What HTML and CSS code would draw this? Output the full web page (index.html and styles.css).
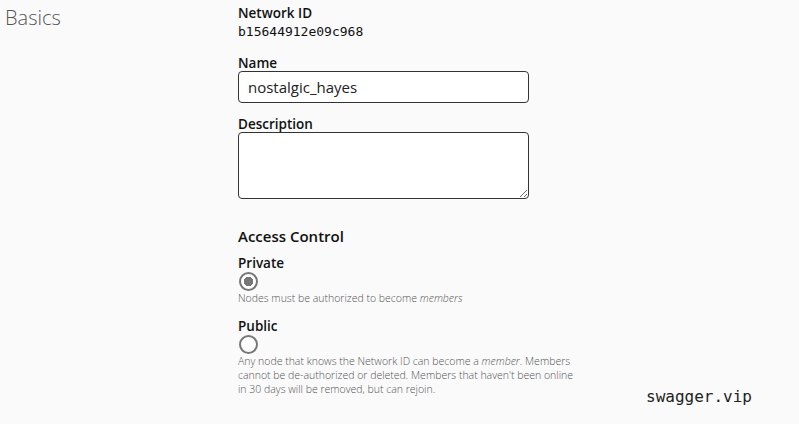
FILE: index.html
```html
<!DOCTYPE html>
<html lang="en">
<head>
  <meta charset="UTF-8">
  <title>Network settings</title>
  <meta name="viewport" content="width=device-width, initial-scale=1.0">
  <link rel="stylesheet" href="styles.css">
</head>
<body>
  <div class="page">
    <div class="side">
      <h1 class="section-title">Basics</h1>
    </div>

    <div class="form">
      <div class="field">
        <div class="label">Network ID</div>
        <div class="net-id">b15644912e09c968</div>
      </div>

      <div class="field">
        <label class="label" for="name">Name</label>
        <input class="text-input" id="name" type="text" value="nostalgic_hayes">
      </div>

      <div class="field">
        <label class="label" for="desc">Description</label>
        <textarea class="text-area" id="desc"></textarea>
      </div>

      <h2 class="sub-title">Access Control</h2>

      <div class="option">
        <div class="label">Private</div>
        <input class="radio" type="radio" name="access" checked>
        <p class="hint">Nodes must be authorized to become <em>members</em></p>
      </div>

      <div class="option">
        <div class="label">Public</div>
        <input class="radio" type="radio" name="access">
        <p class="hint">Any node that knows the Network ID can become a <em>member</em>. Members cannot be de-authorized or deleted. Members that haven't been online in 30 days will be removed, but can rejoin.</p>
      </div>
    </div>
  </div>

  <div class="watermark">swagger.vip</div>
</body>
</html>
```

FILE: styles.css
```css
body {
  margin: 0;
  padding: 0;
  background: #fafafa;
  font-family: 'Open Sans', sans-serif;
  color: #111;
  height: 424px;
  overflow: hidden;
  position: relative;
}

.page {
  display: flex;
}

.side {
  width: 233px;
  padding-left: 5px;
}

.section-title {
  margin: 4px 0 0;
  font-size: 20px;
  font-weight: 300;
  color: #555;
}

.form {
  width: 340px;
  padding-top: 5px;
}

.field {
  margin-bottom: 13px;
}

.label {
  display: block;
  font-size: 13.5px;
  font-weight: 600;
  line-height: 16px;
}

.net-id {
  font-family: 'DejaVu Sans Mono', monospace;
  font-size: 13px;
  line-height: 20px;
  margin-top: 1px;
}

.text-input,
.text-area {
  display: block;
  box-sizing: border-box;
  width: 291px;
  margin: 0;
  border: 1px solid #333;
  border-radius: 4px;
  background: #fff;
  font-family: 'Open Sans', sans-serif;
  font-size: 15px;
  color: #222;
}

.text-input {
  height: 32px;
  padding: 0 9px;
}

.text-area {
  height: 67px;
  resize: vertical;
}

.sub-title {
  margin: 27px 0 9px;
  font-size: 15px;
  font-weight: 600;
}

.option {
  margin-bottom: 13px;
}

.radio {
  appearance: none;
  display: block;
  width: 19px;
  height: 19px;
  margin: 1px 0 0 1px;
  border: 2px solid #777;
  border-radius: 50%;
  background: #fff;
  box-sizing: border-box;
}

.radio:checked {
  background: radial-gradient(circle, #777 0 4.5px, #fff 5px);
}

.hint {
  margin: 0;
  font-size: 10.5px;
  line-height: 14px;
  color: #555;
  font-weight: 300;
}

.watermark {
  position: absolute;
  left: 646px;
  top: 387px;
  font-family: 'DejaVu Sans Mono', monospace;
  font-size: 16px;
  color: #222;
}
```
